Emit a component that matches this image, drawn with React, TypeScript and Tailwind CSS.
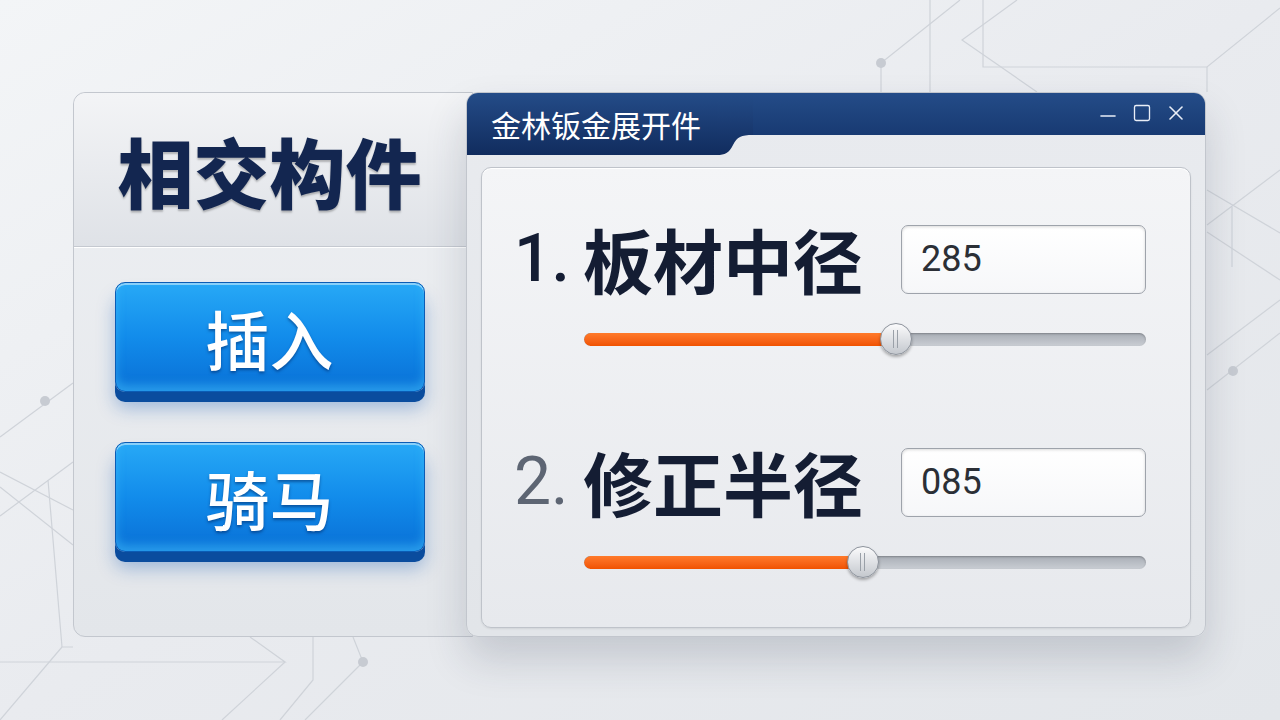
import React from 'react';
import { Minus, Square, X } from 'lucide-react';

const cjk = "font-['Noto_Sans_CJK_SC','Noto_Sans',sans-serif]";

const Circuit: React.FC = () => (
  <svg className="absolute inset-0" width="1280" height="720" viewBox="0 0 1280 720" fill="none">
    <g stroke="#cfd3d9" strokeWidth="1.2">
      {/* top right */}
      <path d="M881 92 V63 L960 0" />
      <path d="M930 0 V92" />
      <path d="M1017 0 L962 40 L1037 92" />
      <path d="M983 0 V67 H1207 L1280 8" />
      <path d="M1207 67 V92" />
      {/* right side */}
      <path d="M1207 190 L1280 233" />
      <path d="M1207 225 L1280 170" />
      <path d="M1232 207 V267" />
      <path d="M1207 232 L1280 280" />
      <path d="M1207 355 L1280 300" />
      <path d="M1207 390 L1280 333" />
      {/* left side */}
      <path d="M0 437 L73 383" />
      <path d="M0 472 L73 510" />
      <path d="M0 487 L73 545" />
      <path d="M0 516 L73 462" />
      <path d="M48 480 L62 647 H73" />
      <path d="M62 647 L0 720" />
      {/* bottom */}
      <path d="M0 662 H285 L250 637" />
      <path d="M285 662 L222 720" />
      <path d="M313 637 V680 L280 720" />
      <path d="M353 637 L363 662 L305 720" />
    </g>
    <g fill="#c7cbd2">
      <circle cx="881" cy="63" r="5" />
      <circle cx="1233" cy="371" r="5" />
      <circle cx="45" cy="401" r="5" />
      <circle cx="363" cy="662" r="5" />
    </g>
  </svg>
);

const BlueButton: React.FC<{ label: string }> = ({ label }) => (
  <button className="relative w-[310px] h-[110px] rounded-[10px] border border-[#0b5cb5] bg-gradient-to-b from-[#27a9f6] via-[#128ceb] to-[#0a70d6] shadow-[inset_0_2px_0_rgba(255,255,255,0.45),inset_0_-6px_10px_rgba(70,200,255,0.5),0_10px_0_#0a4c9e,0_16px_18px_rgba(20,90,180,0.35)] flex items-center justify-center">
    <span className={`${cjk} text-[64px] leading-none font-medium text-white [text-shadow:0_2px_3px_rgba(0,40,100,0.55)]`}>
      {label}
    </span>
  </button>
);

const Slider: React.FC<{ pct: number }> = ({ pct }) => (
  <div className="relative h-8 flex items-center">
    <div className="w-full h-[13px] rounded-full bg-gradient-to-b from-[#a9aeb6] to-[#c9cdd3] shadow-[inset_0_1px_2px_rgba(0,0,0,0.25)] overflow-hidden">
      <div
        className="h-full rounded-full bg-gradient-to-b from-[#ff7a2a] to-[#f05200]"
        style={{ width: `${pct}%` }}
      />
    </div>
    <div
      className="absolute top-0 -ml-4 w-8 h-8 rounded-full border border-[#8d939c] bg-gradient-to-b from-[#fbfbfc] to-[#c4c8ce] shadow-[0_2px_3px_rgba(0,0,0,0.3)] flex items-center justify-center"
      style={{ left: `${pct}%` }}
    >
      <div className="w-[5px] h-[18px] border-x border-[#9aa0a8]" />
    </div>
  </div>
);

const Field: React.FC<{ num: string; numClass: string; label: string; value: string; pct: number }> = ({
  num,
  numClass,
  label,
  value,
  pct,
}) => (
  <div>
    <div className="flex items-center justify-between pl-[32px] pr-[44px]">
      <div className={`${cjk} flex items-center text-[70px] leading-none font-bold text-[#141d33]`}>
        <span className={`font-['Roboto',sans-serif] text-[66px] ${numClass} w-[69px]`}>{num}</span>
        <span>{label}</span>
      </div>
      <div className="w-[245px] h-[69px] rounded-[7px] border border-[#9ea3ab] bg-gradient-to-b from-white to-[#f6f7f9] shadow-[inset_0_1px_3px_rgba(0,0,0,0.15)] flex items-center pl-[19px]">
        <span className="font-['Roboto',sans-serif] text-[36px] text-[#2b2f36]">{value}</span>
      </div>
    </div>
    <div className="pl-[102px] pr-[44px] mt-[29px]">
      <Slider pct={pct} />
    </div>
  </div>
);

export default function App() {
  return (
    <div className="relative w-[1280px] h-[720px] overflow-hidden bg-gradient-to-br from-[#f3f5f7] via-[#e9ebef] to-[#e3e6ea]">
      <Circuit />

      <div className="relative flex pt-[92px] pl-[73px]">
        {/* Left panel */}
        <div className="w-[400px] -mr-[7px] h-[545px] rounded-l-[12px] border border-[#c3c7ce] bg-gradient-to-b from-[#eef0f3] to-[#e3e6ea] flex flex-col">
          <div className="h-[154px] rounded-tl-[12px] border-b border-[#c5c9d0] bg-gradient-to-b from-[#f3f4f6] to-[#dfe2e7] shadow-[0_1px_0_#ffffff] flex items-center justify-center pr-[7px]">
            <span className={`${cjk} text-[76px] leading-none font-black text-[#132650] [text-shadow:0_2px_2px_rgba(0,0,0,0.25)]`}>
              相交构件
            </span>
          </div>
          <div className="flex flex-col items-center gap-[50px] pt-[35px] pr-[7px]">
            <BlueButton label="插入" />
            <BlueButton label="骑马" />
          </div>
        </div>

        {/* Window */}
        <div className="relative w-[740px] h-[545px] rounded-[12px] border border-[#c2c6cd] bg-gradient-to-b from-[#e9ebef] to-[#e2e5e9] shadow-[0_22px_40px_rgba(40,50,70,0.18)] flex flex-col">
          <div className="flex items-start">
            <div className="w-[250px] h-[62px] rounded-tl-[11px] bg-gradient-to-b from-[#244c88] to-[#112c5e] flex items-center pl-[24px]">
              <span className={`${cjk} text-[30px] leading-none text-white`}>金林钣金展开件</span>
            </div>
            <svg width="36" height="62" viewBox="0 0 36 62" className="shrink-0">
              <defs>
                <linearGradient id="tb" x1="0" y1="0" x2="0" y2="1">
                  <stop offset="0" stopColor="#244c88" />
                  <stop offset="1" stopColor="#112c5e" />
                </linearGradient>
              </defs>
              <path d="M0 0 H36 V42 C24 42 20 44 16 52 C12 60 8 62 0 62 Z" fill="url(#tb)" />
            </svg>
            <div className="flex-1 h-[42px] rounded-tr-[11px] bg-gradient-to-b from-[#244c88] to-[#183a72] flex items-center justify-end gap-[12px] pr-[17px] text-[#e9eef7]">
              <Minus size={24} strokeWidth={1.6} className="mt-[4px]" />
              <Square size={20} strokeWidth={1.6} className="-mt-[2px]" />
              <X size={24} strokeWidth={1.6} className="-mt-[2px]" />
            </div>
          </div>

          <div className="flex-1 px-[14px] pt-[12px] pb-[8px]">
            <div className="h-full rounded-[10px] border border-[#bfc3ca] bg-gradient-to-b from-[#f4f5f7] to-[#e7e9ed] shadow-[inset_0_1px_0_#ffffff,0_1px_2px_rgba(0,0,0,0.08)] pt-[56px] flex flex-col gap-[92px]">
              <Field num="1." numClass="text-[#141d33] font-medium" label="板材中径" value="285" pct={55.5} />
              <Field num="2." numClass="text-[#5d6573] font-normal" label="修正半径" value="085" pct={49.6} />
            </div>
          </div>
        </div>
      </div>

      <div className={`${cjk} absolute right-[8px] bottom-[4px] text-[26px] font-bold text-[rgba(120,130,145,0.025)]`}>
        百度 AI生成
      </div>
    </div>
  );
}
